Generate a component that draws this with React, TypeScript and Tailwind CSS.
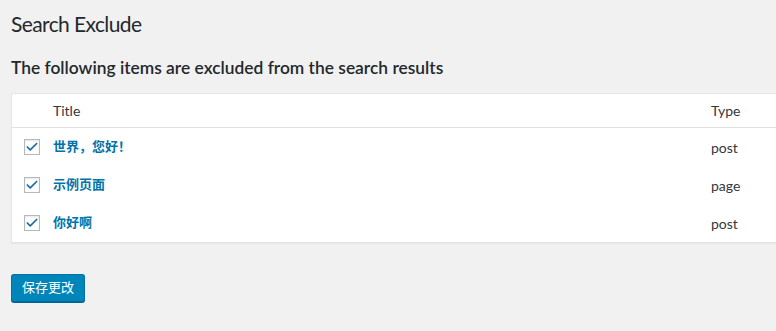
import { Check } from "lucide-react";

const rows = [
  { title: "世界，您好！", type: "post" },
  { title: "示例页面", type: "page" },
  { title: "你好啊", type: "post" },
];

const font = { fontFamily: 'Lato, "Noto Sans CJK SC", sans-serif' };

export default function App() {
  return (
    <div
      className="w-[776px] h-[331px] overflow-hidden bg-[#f1f1f1] text-[#23282d] pl-[11px]"
      style={font}
    >
      <h1 className="pt-[9px] text-[21px] leading-[29px] tracking-[-0.6px] font-normal text-[#23282d]">Search Exclude</h1>

      <h2 className="mt-[19px] text-[17.4px] leading-[22px] font-semibold text-[#23282d]">
        The following items are excluded from the search results
      </h2>

      <div className="mt-[14px] w-[800px] bg-white border border-[#e5e5e5] shadow-[0_1px_1px_rgba(0,0,0,0.04)]">
        {/* header */}
        <div className="flex items-center h-[34px] border-b border-[#e1e1e1] text-[14px] text-[#32373c]">
          <div className="w-[41px]" />
          <div className="flex-1">Title</div>
          <div className="w-[99px]">Type</div>
        </div>

        {rows.map((r) => (
          <div key={r.title} className="flex items-center h-[38px] text-[13px]">
            <div className="w-[41px] flex justify-end">
              <span className="mr-[13px] w-[16px] h-[16px] border border-[#b4b9be] bg-white shadow-[inset_0_1px_2px_rgba(0,0,0,0.1)] flex items-center justify-center">
                <Check className="w-[14px] h-[14px] text-[#1e6fa0]" strokeWidth={3} />
              </span>
            </div>
            <div className="flex-1 font-bold text-[#0073aa]">{r.title}</div>
            <div className="w-[99px] text-[14px] text-[#32373c]">{r.type}</div>
          </div>
        ))}
      </div>

      <button className="mt-[31px] h-[28px] px-[10px] rounded-[3px] bg-[#0085ba] border border-[#0073aa] border-b-[#006799] text-white text-[13px] shadow-[0_1px_0_#006799]">
        保存更改
      </button>
    </div>
  );
}
